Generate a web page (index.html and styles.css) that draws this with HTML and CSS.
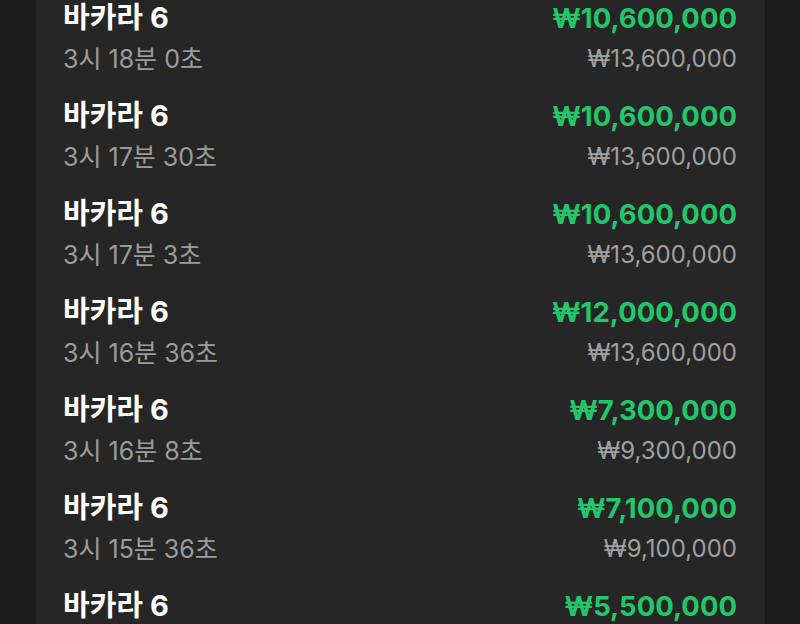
FILE: index.html
```html
<!DOCTYPE html>
<html lang="ko">
<head>
<meta charset="utf-8">
<link rel="stylesheet" href="styles.css">
</head>
<body>
<div class="page">
  <ul class="list">
    <li class="row"><div class="left"><div class="title">바카라 6</div><div class="sub">3시 18분 0초</div></div><div class="right"><div class="win">₩10,600,000</div><div class="bet">₩13,600,000</div></div></li>
    <li class="row"><div class="left"><div class="title">바카라 6</div><div class="sub">3시 17분 30초</div></div><div class="right"><div class="win">₩10,600,000</div><div class="bet">₩13,600,000</div></div></li>
    <li class="row"><div class="left"><div class="title">바카라 6</div><div class="sub">3시 17분 3초</div></div><div class="right"><div class="win">₩10,600,000</div><div class="bet">₩13,600,000</div></div></li>
    <li class="row"><div class="left"><div class="title">바카라 6</div><div class="sub">3시 16분 36초</div></div><div class="right"><div class="win">₩12,000,000</div><div class="bet">₩13,600,000</div></div></li>
    <li class="row"><div class="left"><div class="title">바카라 6</div><div class="sub">3시 16분 8초</div></div><div class="right"><div class="win">₩7,300,000</div><div class="bet">₩9,300,000</div></div></li>
    <li class="row"><div class="left"><div class="title">바카라 6</div><div class="sub">3시 15분 36초</div></div><div class="right"><div class="win">₩7,100,000</div><div class="bet">₩9,100,000</div></div></li>
    <li class="row"><div class="left"><div class="title">바카라 6</div><div class="sub">3시 15분 8초</div></div><div class="right"><div class="win">₩5,500,000</div><div class="bet">₩7,500,000</div></div></li>
  </ul>
</div>
</body>
</html>
```
FILE: styles.css
```css
html, body {
  margin: 0;
  padding: 0;
  background: #1c1c1c;
  height: 624px;
  overflow: hidden;
}
body {
  font-family: Inter, "Noto Sans CJK KR", sans-serif;
}
.page {
  margin: 0 35px 0 36px;
  background: #262626;
  min-height: 624px;
}
.list {
  list-style: none;
  margin: 0;
  padding: 0 28px 0 27px;
}
.row {
  display: flex;
  justify-content: space-between;
  height: 98px;
}
.left, .right {
  display: flex;
  flex-direction: column;
}
.right {
  align-items: flex-end;
}
.title {
  color: #ffffff;
  font-weight: 700;
  font-size: 29px;
  line-height: 36px;
}
.sub {
  color: #9c9c9c;
  font-size: 25px;
  line-height: 36px;
  margin-top: 5px;
}
.win {
  color: #22c76a;
  font-weight: 700;
  font-size: 27.5px;
  line-height: 36px;
}
.bet {
  color: #a0a0a0;
  font-size: 24px;
  line-height: 36px;
  margin-top: 5px;
}
```
